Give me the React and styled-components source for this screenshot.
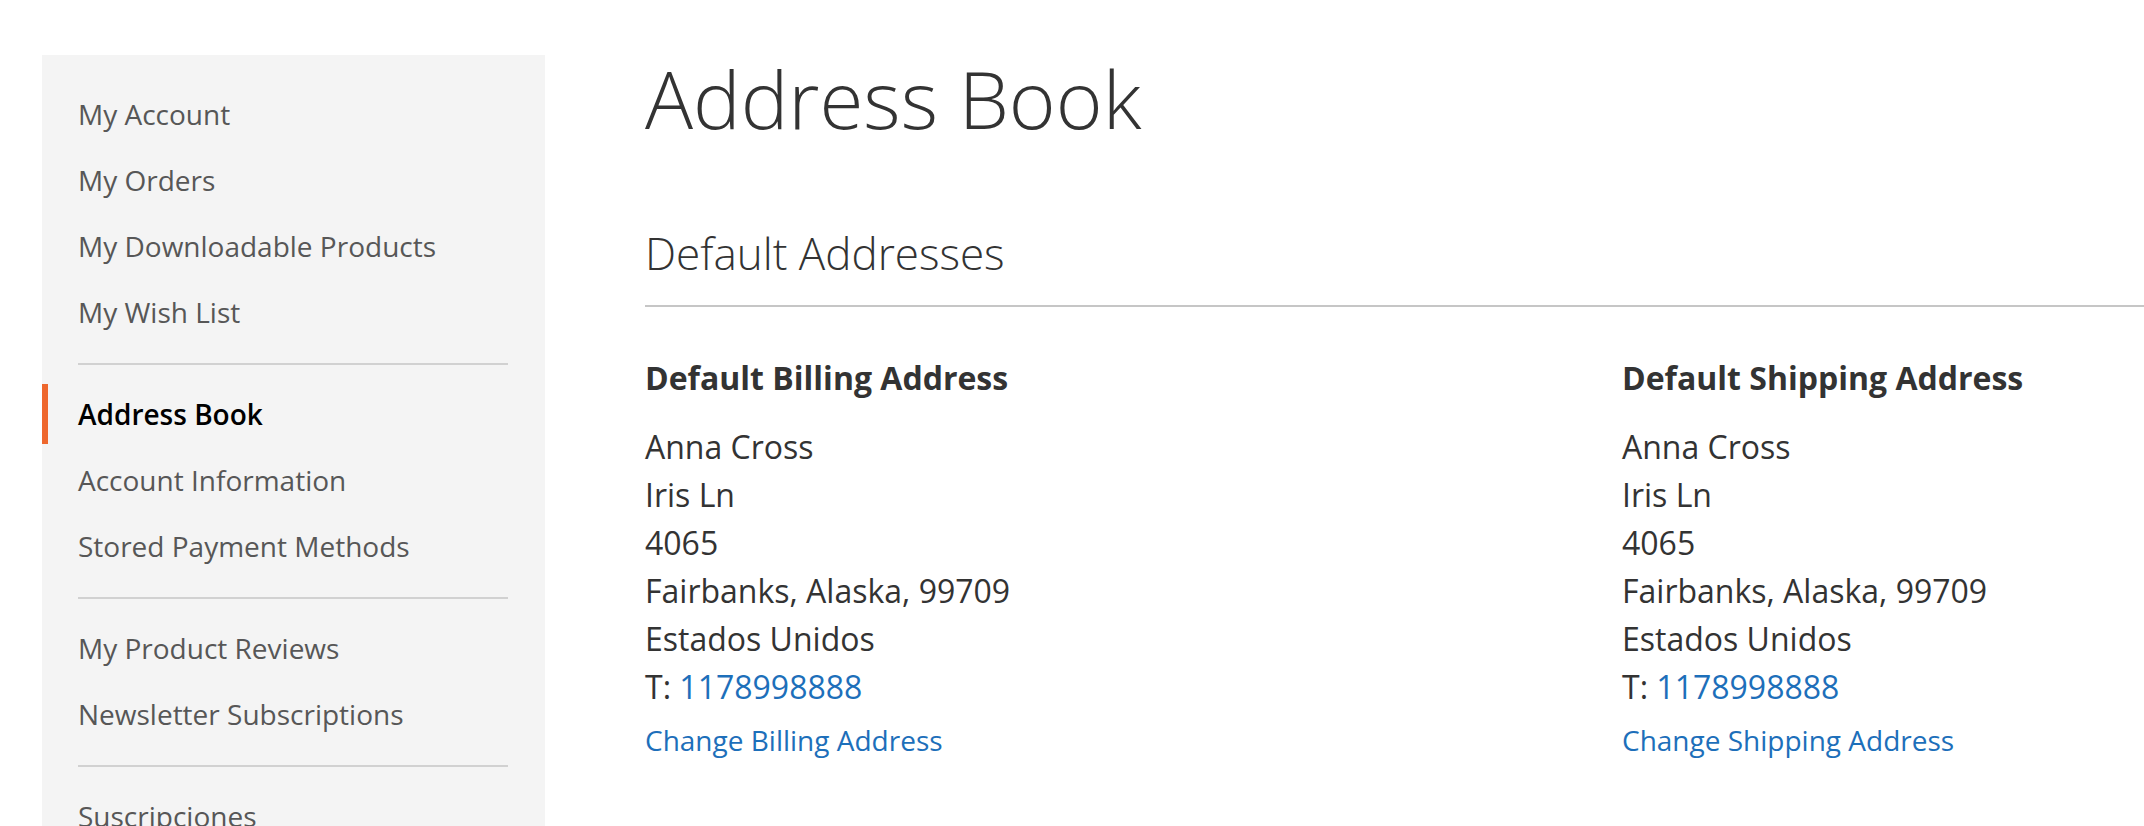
import React from "react";
import styled, { createGlobalStyle } from "styled-components";

const Global = createGlobalStyle`
  html, body { margin: 0; padding: 0; background: #fff; }
  body { font-family: "Open Sans", "Liberation Sans", sans-serif; color: #333; }
  * { box-sizing: border-box; }
`;

const Page = styled.div`
  display: flex;
  align-items: flex-start;
  padding-left: 42px;
  height: 826px;
  overflow: hidden;
`;

const Sidebar = styled.nav`
  flex: 0 0 503px;
  margin-top: 55px;
  min-height: 771px;
  background: #f4f4f4;
  padding-top: 29px;
`;

const NavList = styled.ul`
  list-style: none;
  margin: 0;
  padding: 0;
  display: flex;
  flex-direction: column;
  gap: 6px;
`;

const NavItem = styled.li`
  height: 60px;
  padding: 10px 36px 10px ${(p) => (p.$active ? 30 : 36)}px;
  border-left: ${(p) => (p.$active ? "6px solid #ee672d" : "none")};
  font-size: 28px;
  line-height: 40px;
  font-weight: ${(p) => (p.$active ? 600 : 400)};
  color: ${(p) => (p.$active ? "#000" : "#575757")};
  white-space: nowrap;
`;

const Delimiter = styled.li`
  height: 2px;
  margin: 15px 37px 13px 36px;
  background: #d1d1d1;
`;

const Main = styled.main`
  flex: 1;
  margin-left: 100px;
  padding-top: 54px;
`;

const Title = styled.h1`
  margin: 0;
  font-size: 80px;
  line-height: 88px;
  font-weight: 300;
  color: #333;
`;

const BlockTitle = styled.h2`
  margin: 87px 0 0;
  padding-bottom: 28px;
  border-bottom: 2px solid #c6c6c6;
  font-size: 44px;
  line-height: 48px;
  font-weight: 300;
  color: #333;
`;

const Boxes = styled.div`
  display: grid;
  grid-template-columns: 977px 1fr;
  margin-top: 51px;
`;

const Box = styled.div`
  display: flex;
  flex-direction: column;
`;

const BoxTitle = styled.strong`
  font-size: 32px;
  line-height: 40px;
  font-weight: 700;
  color: #333;
`;

const Address = styled.address`
  margin-top: 25px;
  font-style: normal;
  font-size: 32px;
  line-height: 48px;
  color: #333;
`;

const Link = styled.a`
  color: #1d6fba;
  text-decoration: none;
`;

const Action = styled(Link)`
  margin-top: 9px;
  font-size: 28px;
  line-height: 40px;
`;

const navGroups = [
  ["My Account", "My Orders", "My Downloadable Products", "My Wish List"],
  ["Address Book", "Account Information", "Stored Payment Methods"],
  ["My Product Reviews", "Newsletter Subscriptions"],
  ["Suscripciones"],
];

function AddressBox({ title, action }) {
  return (
    <Box>
      <BoxTitle>{title}</BoxTitle>
      <Address>
        Anna Cross
        <br />
        Iris Ln
        <br />
        4065
        <br />
        Fairbanks, Alaska, 99709
        <br />
        Estados Unidos
        <br />
        T: <Link href="#">1178998888</Link>
      </Address>
      <Action href="#">{action}</Action>
    </Box>
  );
}

export default function App() {
  return (
    <>
      <Global />
      <Page>
        <Sidebar>
          <NavList>
            {navGroups.map((group, gi) => (
              <React.Fragment key={gi}>
                {gi > 0 && <Delimiter />}
                {group.map((label) => (
                  <NavItem key={label} $active={label === "Address Book"}>
                    {label}
                  </NavItem>
                ))}
              </React.Fragment>
            ))}
          </NavList>
        </Sidebar>
        <Main>
          <Title>Address Book</Title>
          <BlockTitle>Default Addresses</BlockTitle>
          <Boxes>
            <AddressBox title="Default Billing Address" action="Change Billing Address" />
            <AddressBox title="Default Shipping Address" action="Change Shipping Address" />
          </Boxes>
        </Main>
      </Page>
    </>
  );
}
